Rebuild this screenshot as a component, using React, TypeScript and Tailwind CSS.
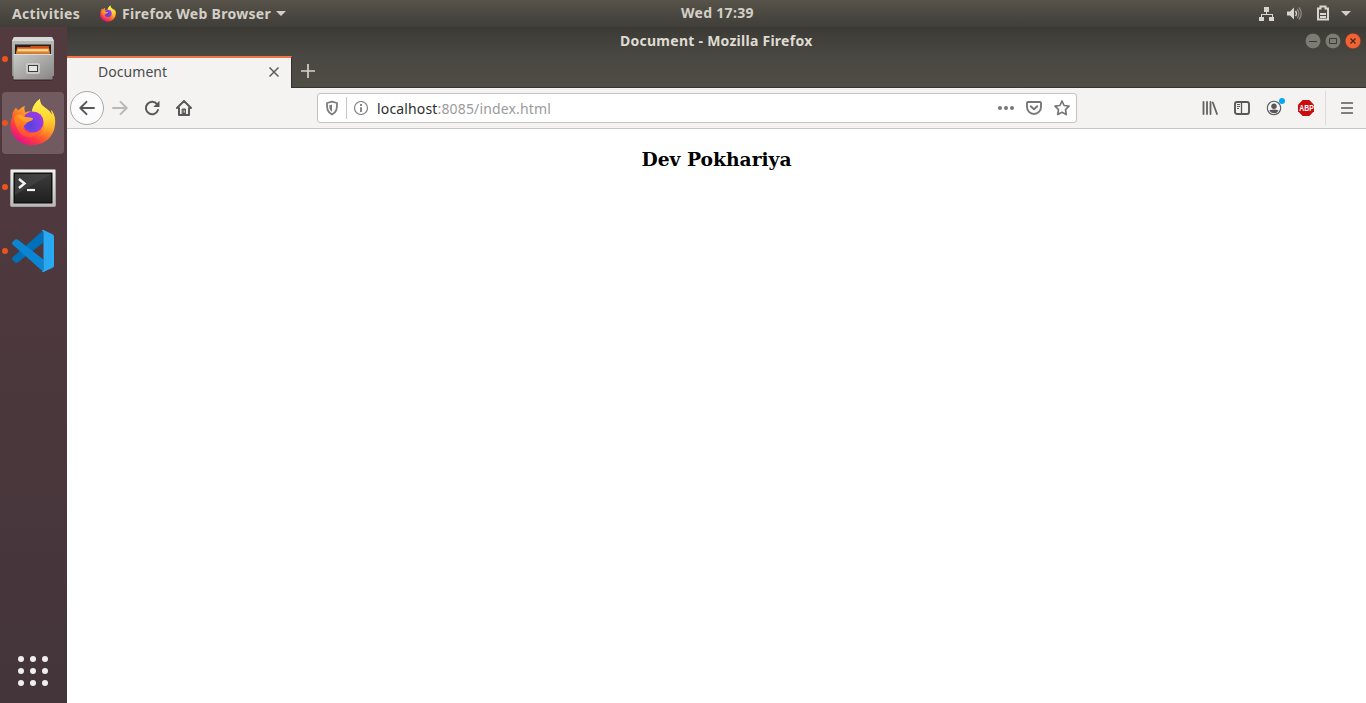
import React from "react";

const ui = "font-['Noto_Sans','Open_Sans',sans-serif]";

function FirefoxLogo({ id, className }: { id: string; className: string }) {
  return (
    <svg viewBox="0 0 46 48" className={className} aria-hidden="true">
      <defs>
        <linearGradient id={id + "a"} x1="0.85" y1="0.1" x2="0.25" y2="0.95">
          <stop offset="0" stopColor="#fff44f" />
          <stop offset="0.35" stopColor="#ffb02e" />
          <stop offset="0.6" stopColor="#ff6a2b" />
          <stop offset="0.8" stopColor="#ff3647" />
          <stop offset="1" stopColor="#e31587" />
        </linearGradient>
        <linearGradient id={id + "b"} x1="0.6" y1="0" x2="0.7" y2="1">
          <stop offset="0" stopColor="#fff44f" />
          <stop offset="0.55" stopColor="#ffd12e" />
          <stop offset="1" stopColor="#ff980e" stopOpacity="0" />
        </linearGradient>
        <radialGradient id={id + "c"} cx="0.35" cy="0.65" r="0.7">
          <stop offset="0" stopColor="#5b3fe0" />
          <stop offset="0.5" stopColor="#7542e5" />
          <stop offset="1" stopColor="#a436e1" />
        </radialGradient>
        <linearGradient id={id + "d"} x1="0.7" y1="0" x2="0.3" y2="1">
          <stop offset="0" stopColor="#ffa21f" />
          <stop offset="0.5" stopColor="#ff7a1f" />
          <stop offset="1" stopColor="#ff3b47" />
        </linearGradient>
      </defs>
      <path
        fill={`url(#${id}a)`}
        d="M30 1C25 4 22 10 22 14C19 13 17 14 15.500 14.500C14 12 14 10 15 8C12 8.500 10 10.500 9 12C7.500 12 6.500 11 6 9.500C3 13 2 16 2 20C0 24 0 30 2 35C6 43 14 48 23 47C35 47 44 38 45 27C46 21 44 15 41 12C42 15 42 16 42 17C39 11 34 10 31 6C30 4 30 2 30 1Z"
      />
      <path
        fill={`url(#${id}b)`}
        d="M30 1C25 4 22 10 22 14C29 14 34 20 34 27C34 33 31 36 27 39C35 41 42 35 44 28C46 22 44 15 41 12C42 15 42 16 42 17C39 11 34 10 31 6C30 4 30 2 30 1Z"
      />
      <circle cx="23" cy="24" r="10.500" fill={`url(#${id}c)`} />
      <path
        fill={`url(#${id}d)`}
        d="M4 19C8 15 12 16 15 19C19 20 22 19 23 21C21 24 17 23 16 26C14 27 13 29 13.500 31C16 36 22 36.500 27 34C25 39 19 41 14 38C8 35 5 27 4 19Z"
      />
      <path fill="#ffa02a" d="M7 18C10 16 13 17 15 19C19 20 22 19 23 21C21 23 18 23 16 24C13 23 10 21 7 18Z" />
    </svg>
  );
}

function FilesLogo() {
  return (
    <svg viewBox="0 0 44 46" className="h-[46px] w-11" aria-hidden="true">
      <defs>
        <linearGradient id="cab" x1="0" y1="0" x2="0" y2="1">
          <stop offset="0" stopColor="#bdbdbb" />
          <stop offset="1" stopColor="#8c8c8a" />
        </linearGradient>
        <linearGradient id="front" x1="0" y1="0" x2="1" y2="1">
          <stop offset="0" stopColor="#c9c9c8" />
          <stop offset="0.5" stopColor="#a9a9a8" />
          <stop offset="1" stopColor="#878786" />
        </linearGradient>
      </defs>
      <rect x="3" y="42" width="38" height="3" rx="1" fill="#2b1a1e" opacity=".45" />
      <path d="M3 1H41L43 5V40H1V5Z" fill="url(#cab)" />
      <path d="M3 1H41L43 5H1Z" fill="#d9d9d7" />
      <rect x="4" y="8.500" width="36" height="10" fill="#24211f" />
      <path d="M6 11H19L20 10H38V16H6Z" fill="#ce5018" />
      <path d="M6 12.500H38L39 17.500H5Z" fill="#f09b3c" />
      <path d="M7 13.500H37V14.700H7Z" fill="#fff3dd" />
      <path d="M5 16.500H39V18H5Z" fill="#c9762f" />
      <rect x="2.500" y="18" width="39" height="25.500" rx="1" fill="url(#front)" />
      <path d="M3 18.500H41" stroke="#ddd" />
      <rect x="15" y="27" width="14" height="11" rx="2" fill="#c9c9c8" />
      <rect x="17.500" y="29.500" width="9" height="6" fill="#e5e5e4" stroke="#3c3c3c" />
    </svg>
  );
}

function TerminalLogo() {
  return (
    <svg viewBox="0 0 46 40" className="mt-[3px] h-10 w-[46px]" aria-hidden="true">
      <defs>
        <linearGradient id="term" x1="0" y1="0" x2="0" y2="1">
          <stop offset="0" stopColor="#3b3c3b" />
          <stop offset="1" stopColor="#1f201f" />
        </linearGradient>
        <linearGradient id="shine" x1="0" y1="0" x2="0.400" y2="1">
          <stop offset="0" stopColor="#fff" stopOpacity="0" />
          <stop offset="1" stopColor="#fff" stopOpacity="0.120" />
        </linearGradient>
        <linearGradient id="termframe" x1="0" y1="0" x2="0" y2="1">
          <stop offset="0" stopColor="#f1f1f0" />
          <stop offset="1" stopColor="#b8b8b7" />
        </linearGradient>
      </defs>
      <rect x="0.500" y="0.500" width="45" height="37" rx="1" fill="url(#termframe)" stroke="#a2a09f" />
      <rect x="3.500" y="3.500" width="39" height="31" fill="#101110" />
      <rect x="5" y="5" width="36" height="28" fill="url(#term)" />
      <path d="M5 5H41L5 26Z" fill="url(#shine)" />
      <path d="M9 10L14.500 14.500L9 19" fill="none" stroke="#f4f4f4" strokeWidth="2.400" />
      <path d="M17 21H25" stroke="#f4f4f4" strokeWidth="2.200" />
    </svg>
  );
}

function CodeLogo() {
  return (
    <svg viewBox="0 0 44 44" className="size-11" aria-hidden="true">
      <path d="M1.500 28.500Q.5 29.700 1.500 31L4.100 33.400Q5.500 34.400 6.900 33.200L32.500 13.500V1Z" fill="#0070b8" />
      <path d="M1.500 15.500Q.5 14.300 1.500 13L4.100 10.600Q5.500 9.600 6.900 10.800L32.500 30.500V43Z" fill="#0a86d2" />
      <path d="M32.500 43Q31.500 43.300 30.200 42C31 42.800 32.500 42 32.500 40.500V3.500C32.500 2 31 1.200 30.200 2Q31.500.5 32.500 1L41.500 5.200Q43 6 43 7.600V36.400Q43 38 41.500 38.800Z" fill="#2aa9f3" />
    </svg>
  );
}

function DockItem({ children, active }: { children: React.ReactNode; active?: boolean }) {
  return (
    <div className={active ? "flex h-[62px] w-[62px] items-center rounded bg-[#725b60]" : "flex h-[62px] w-[62px] items-center"}>
      <span className="size-[6px] shrink-0 rounded-full bg-[#e95420]" />
      <div className="flex w-[50px] justify-center">{children}</div>
    </div>
  );
}

function Dock() {
  return (
    <aside className="flex w-[67px] shrink-0 flex-col bg-linear-to-b from-[#533a3f] to-[#43353a] pt-px pl-[2px]">
      <div className="flex flex-col gap-[2px]">
        <DockItem>
          <FilesLogo />
        </DockItem>
        <DockItem active>
          <FirefoxLogo id="dock" className="-mt-0.5 h-12 w-[46px]" />
        </DockItem>
        <DockItem>
          <TerminalLogo />
        </DockItem>
        <DockItem>
          <CodeLogo />
        </DockItem>
      </div>
      <div className="mt-auto mb-[17px] ml-4 grid w-[30px] grid-cols-3 gap-[6px]">
        {Array.from({ length: 9 }, (_, i) => (
          <span key={i} className="size-[6px] rounded-full bg-[#f0efef]" />
        ))}
      </div>
    </aside>
  );
}

function TopBar() {
  return (
    <header className={`${ui} grid h-[27px] shrink-0 grid-cols-[1fr_auto_1fr] items-center bg-linear-to-b from-[#57534a] to-[#403e39] text-[14px] font-bold tracking-[0.3px] text-[#d3cfc7]`}>
      <div className="flex items-center pl-3">
        <span className="w-[88px] whitespace-nowrap">Activities</span>
        <FirefoxLogo id="bar" className="-mt-px h-[17px] w-4" />
        <span className="ml-[6px] w-[150px] whitespace-nowrap">Firefox Web Browser</span>
        <svg viewBox="0 0 10 5" className="ml-1 h-[5px] w-[10px]">
          <path d="M0 0H10L5 5Z" fill="#d3cfc8" />
        </svg>
      </div>
      <span className="-mt-0.5 ml-17.5 w-[74px] whitespace-nowrap">Wed 17:39</span>
      <div className="flex items-center justify-end pr-[15px]">
        <svg viewBox="0 0 16 16" className="size-4" fill="#d8d5cf">
          <path d="M5 1h5v5H8v2h6v3h1v4h-5v-4h3V9H3v2h2v4H0v-4h2V8h5V6H5z" />
        </svg>
        <svg viewBox="0 0 16 16" className="ml-[11px] size-4" fill="none">
          <path d="M1 5.500h3l4-4v12l-4-4H1z" fill="#d8d5cf" />
          <path d="M9.500 5q2 2.500 0 5" stroke="#d8d5cf" strokeWidth="1.400" />
          <path d="M11.200 3q3.400 4.500 0 9M13 1.500q4.500 6 0 12" stroke="#8d8981" strokeWidth="1.300" />
        </svg>
        <svg viewBox="0 0 12 16" className="-mt-px ml-[15px] h-4 w-3">
          <path d="M3.500 1.500h5v2H11v11H1v-11h2.500z" fill="none" stroke="#d8d5cf" strokeWidth="2" />
          <path d="M3 9h6M3 12h6" stroke="#d8d5cf" strokeWidth="1.800" />
        </svg>
        <svg viewBox="0 0 10 5" className="ml-3 h-[5px] w-[10px]">
          <path d="M0 0H10L5 5Z" fill="#d3cfc8" />
        </svg>
      </div>
    </header>
  );
}

function TitleBar() {
  return (
    <div className="grid h-7 grid-cols-[1fr_auto_1fr] items-center pb-[3px]">
      <span />
      <span className={`${ui} w-[193px] text-[14px] font-bold tracking-[0.26px] whitespace-nowrap text-[#dfdbd2]`}>Document - Mozilla Firefox</span>
      <div className="flex justify-end gap-1 pr-[5px]">
        <svg viewBox="0 0 16 16" className="size-4">
          <circle cx="8" cy="8" r="7.800" fill="#7d7b73" stroke="#34332f" strokeWidth=".5" />
          <path d="M4 8.500h8" stroke="#3b3a36" />
        </svg>
        <svg viewBox="0 0 16 16" className="size-4">
          <circle cx="8" cy="8" r="7.800" fill="#7d7b73" stroke="#34332f" strokeWidth=".5" />
          <path d="M4.500 5.500h7v5h-7z" fill="none" stroke="#3b3a36" />
        </svg>
        <svg viewBox="0 0 16 16" className="size-4">
          <circle cx="8" cy="8" r="7.800" fill="#ef6335" stroke="#6a3020" strokeWidth=".5" />
          <path d="M5.500 5.500l5 5m0-5l-5 5" stroke="#4b2519" strokeWidth="1.200" />
        </svg>
      </div>
    </div>
  );
}

function TabStrip() {
  return (
    <div className="flex h-8 items-stretch">
      <div className={`${ui} flex w-[225px] items-center border-t-2 border-r border-t-[#ef7548] border-r-[#32312d] bg-[#f4f3f2] pr-[11px] pl-[31px]`}>
        <span className="-mt-[3px] text-[14px] tracking-[0.05px] whitespace-nowrap text-[#4b4b4d]">Document</span>
        <svg viewBox="0 0 12 12" className="-mt-0.5 ml-auto size-3">
          <path d="M1.500 1.500l9 9m0-9l-9 9" stroke="#5c5c5c" strokeWidth="1.500" />
        </svg>
      </div>
      <div className="flex grow items-center border-b border-[#34332f] pb-px pl-[9px]">
        <svg viewBox="0 0 14 14" className="size-[14px]">
          <path d="M7 0v14M0 7h14" stroke="#d5d2cb" strokeWidth="1.700" />
        </svg>
      </div>
    </div>
  );
}

function UrlBar() {
  return (
    <div className="flex h-[30px] w-[760px] items-center rounded-[3px] border border-[#c5c3c1] bg-white pr-[6px] pl-[6px]">
      <svg viewBox="0 0 16 16" className="size-4">
        <path d="M8 1.700l5 1.300c.2 6-.5 9-5 11.500C3.500 12 2.800 9 3 3z" fill="none" stroke="#7b7b7b" strokeWidth="1.800" strokeLinejoin="round" />
        <path d="M8 4.500V11.800C6 10.500 5.300 9 5.300 5.200z" fill="#7b7b7b" />
      </svg>
      <span className="ml-[6px] h-[22px] w-px bg-[#c4c4c4]" />
      <svg viewBox="0 0 16 16" className="ml-[6px] size-4">
        <circle cx="8" cy="8" r="6.500" fill="none" stroke="#7b7b7b" strokeWidth="1.100" />
        <path d="M8 4v2M8 7.200V12" stroke="#7b7b7b" strokeWidth="1.800" />
      </svg>
      <span className={`${ui} ml-2 text-[14px] tracking-[0.15px] whitespace-nowrap text-[#9b9b9c]`}>
        <span className="text-[#2e2e30]">localhost</span>:8085/index.html
      </span>
      <svg viewBox="0 0 16 16" className="ml-auto size-4" fill="#777">
        <circle cx="2" cy="8" r="2" />
        <circle cx="8" cy="8" r="2" />
        <circle cx="14" cy="8" r="2" />
      </svg>
      <svg viewBox="0 0 16 16" className="ml-3 size-4" fill="none" stroke="#777" strokeWidth="1.900" strokeLinejoin="round" strokeLinecap="round">
        <path d="M2 2h12q1 0 1 1v4A7 7 0 0 1 1 7V3q0-1 1-1zM4.700 6.200L8 9.300l3.300-3.100" />
      </svg>
      <svg viewBox="0 0 16 16" className="ml-3 size-4" fill="none" stroke="#777" strokeWidth="1.700" strokeLinejoin="round">
        <path d="M8 1l2.100 4.500 4.900.7-3.500 3.400.8 5L8 12.300l-4.300 2.300.8-5L1 6.200l4.900-.7z" />
      </svg>
    </div>
  );
}

function NavBar() {
  return (
    <div className="flex h-[41px] items-center border-b border-[#c9c7c5] bg-[#f4f3f2] pl-[3px]">
      <div className="flex w-[247px] items-center">
        <span className="flex size-[34px] items-center justify-center rounded-full border border-[#a9a8a7] bg-[#fcfcfc]">
          <svg viewBox="0 0 16 16" className="size-4" fill="none" stroke="#58585a" strokeWidth="1.900" strokeLinecap="round" strokeLinejoin="round">
            <path d="M15 8H1.500M7.500 1.800L1.300 8l6.200 6.200" />
          </svg>
        </span>
        <svg viewBox="0 0 16 16" className="ml-2 size-4" fill="none" stroke="#b9b8b7" strokeWidth="1.900" strokeLinecap="round" strokeLinejoin="round">
          <path d="M1 8h13.500M8.500 1.800L14.700 8l-6.200 6.200" />
        </svg>
        <svg viewBox="0 0 16 16" className="ml-4 size-4" fill="none" stroke="#58585a" strokeWidth="2" strokeLinecap="round">
          <path d="M13 4.200A6.200 6.200 0 1 0 14 10" />
          <path d="M15.500.8V7H9.300z" fill="#58585a" stroke="none" />
        </svg>
        <svg viewBox="0 0 16 16" className="ml-4 size-4" fill="none" stroke="#58585a" strokeWidth="2" strokeLinejoin="round" strokeLinecap="round">
          <path d="M1 8l7-7 7 7M3 8v7h10V8" />
          <path d="M6.500 9h3v5h-3z" fill="#58585a" stroke="#58585a" strokeWidth="1" />
          <path d="M8.200 10.800v1.400" stroke="#f4f3f2" strokeWidth="1" />
        </svg>
      </div>
      <UrlBar />
      <div className="ml-auto flex items-center pr-[11px]">
        <svg viewBox="0 0 16 16" className="size-4" stroke="#626264" strokeWidth="1.800" fill="none" strokeLinecap="round">
          <path d="M1.500 2v12M5 2v12M8.500 2v12M10.800 2.500L15 14" />
        </svg>
        <svg viewBox="0 0 16 16" className="ml-4 size-4" stroke="#58585a" fill="none">
          <rect x="1" y="2" width="14" height="12" rx="2" strokeWidth="1.900" />
          <path d="M7.500 2v12" strokeWidth="1.300" />
          <path d="M3 4.500h3M3 6.500h3M3 8.500h2" />
        </svg>
        <div className="relative ml-4 size-4">
          <svg viewBox="0 0 16 16" className="size-4">
            <circle cx="8" cy="8" r="6.700" fill="none" stroke="#58585a" strokeWidth="1.100" />
            <circle cx="8" cy="6.200" r="2.700" fill="#58585a" />
            <path d="M3.400 10.400c2.800-1.300 6.400-1.300 9.200 0A5.200 5.200 0 0 1 3.400 10.400z" fill="#58585a" />
          </svg>
          <span className="absolute -top-[2px] left-[13px] size-[6px] rounded-full bg-[#00a8f5]" />
        </div>
        <div className="relative ml-4 flex size-4 items-center justify-center">
          <svg viewBox="0 0 16 16" className="absolute inset-0 size-4">
            <path d="M4.700 0h6.600L16 4.700v6.600L11.300 16H4.700L0 11.300V4.700z" fill="#c70d0d" />
          </svg>
          <span className="relative scale-x-[0.760] font-['Liberation_Sans',sans-serif] text-[9px] leading-none font-bold text-white">ABP</span>
        </div>
        <span className="ml-[11px] h-[34px] w-px bg-[#dddcda]" />
        <svg viewBox="0 0 16 16" className="ml-[13px] size-4" stroke="#58585a" strokeWidth="1.700" strokeLinecap="round">
          <path d="M2.800 3h10.500M2.800 8h10.500M2.800 13h10.500" />
        </svg>
      </div>
    </div>
  );
}

export default function App() {
  return (
    <div className="flex h-[703px] w-[1366px] flex-col overflow-hidden">
      <TopBar />
      <div className="flex grow">
        <Dock />
        <main className="flex grow flex-col bg-white">
          <div className="bg-linear-to-b from-[#3b3a35] via-[#4a4842] to-[#504d45] pt-px">
            <TitleBar />
            <TabStrip />
          </div>
          <NavBar />
          <h3 className="mt-[19px] text-center font-['DejaVu_Serif',serif] text-[18.72px] leading-[22px] font-bold text-black">Dev Pokhariya</h3>
        </main>
      </div>
    </div>
  );
}
